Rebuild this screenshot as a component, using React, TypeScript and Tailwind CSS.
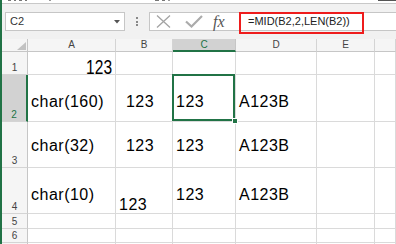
import React from 'react'

const green = '#217346'

function ColHead({ label, active = false }: { label: string; active?: boolean }) {
    return (
        <div
            className={
                active
                    ? 'flex items-center justify-center bg-[#d2d2d2] border-r border-r-[#c6c6c6] border-b-2 border-b-[#217346] text-[10px] leading-none text-[#217346]'
                    : 'flex items-center justify-center bg-[#f5f5f5] border-r border-r-[#d4d4d4] border-b border-b-[#c6c6c6] text-[10px] leading-none text-[#444]'
            }
        >
            {label}
        </div>
    )
}

function RowHead({ label, active = false }: { label: string; active?: boolean }) {
    return (
        <div
            className={
                active
                    ? 'flex items-end justify-center pb-[1px] bg-[#d2d2d2] border-r-2 border-r-[#217346] border-b border-b-[#d4d4d4] text-[10px] leading-[10px] text-[#217346]'
                    : 'flex items-end justify-center pb-[1px] bg-[#f5f5f5] border-r border-r-[#c6c6c6] border-b border-b-[#d4d4d4] text-[10px] leading-[10px] text-[#444]'
            }
        >
            {label}
        </div>
    )
}

function Cell({ children, className = '' }: { children?: React.ReactNode; className?: string }) {
    return (
        <div className={`flex items-center border-r border-b border-[#dadada] pl-[3px] text-[16px] leading-[21px] tracking-[0.5px] text-black whitespace-pre overflow-visible ${className}`}>
            {children}
        </div>
    )
}

export default function App() {
    return (
        <div className="w-[396px] h-[244px] overflow-hidden bg-white border-l-2 border-[#217346] flex flex-col font-['Liberation_Sans',Arial,sans-serif]">
            {/* cut-off ribbon strip */}
            <div className="h-[4px] shrink-0 border-b border-[#c8c8c8] flex items-start">
                <div className="ml-[6px] flex gap-[3px]">
                    <span className="w-[3px] h-[1px] bg-[#777]" />
                    <span className="w-[2px] h-[1px] bg-[#777]" />
                    <span className="w-[3px] h-[1px] bg-[#777]" />
                    <span className="w-[2px] h-[1px] bg-[#777]" />
                </div>
                <span className="ml-[22px] w-[2px] h-[1px] bg-[#999]" />
                <div className="ml-[104px] flex gap-[3px]">
                    <span className="w-[4px] h-[1px] bg-[#777]" />
                    <span className="w-[3px] h-[1px] bg-[#777]" />
                    <span className="w-[2px] h-[1px] bg-[#999]" />
                </div>
                <span className="ml-auto w-[18px] h-[1px] bg-[#555]" />
            </div>

            {/* formula bar */}
            <div className="h-[35px] shrink-0 bg-[#f1f1f1] flex items-start pt-[8px] pl-[3px]">
                <div className="w-[120px] h-[19px] bg-white border border-[#c6c6c6] flex items-center justify-between pl-[4px] pr-[4px]">
                    <span className="text-[11px] leading-none text-[#333]">C2</span>
                    <svg width="6" height="4" viewBox="0 0 6 4">
                        <path d="M0 0 L6 0 L3 3.5 Z" fill="#555" />
                    </svg>
                </div>
                <div className="ml-[11px] mt-[5px] flex flex-col gap-[1.5px]">
                    <span className="w-[2px] h-[2px] bg-[#888]" />
                    <span className="w-[2px] h-[2px] bg-[#888]" />
                    <span className="w-[2px] h-[2px] bg-[#888]" />
                </div>
                <div className="ml-[11px] flex-1 h-[19px] bg-white border border-r-0 border-[#c6c6c6] relative flex items-center">
                    <svg className="ml-[6px]" width="15" height="13" viewBox="0 0 15 13">
                        <path d="M1 0.5 L14 12.5 M14 0.5 L1 12.5" stroke="#a3a3a3" strokeWidth="1.3" fill="none" />
                    </svg>
                    <svg className="ml-[14px]" width="18" height="13" viewBox="0 0 18 13">
                        <path d="M1 6.5 L6.5 11.5 L17 1" stroke="#ababab" strokeWidth="2.2" fill="none" />
                    </svg>
                    <span className="ml-[10px] w-[17px] text-[16px] leading-none italic text-[#555] font-['Liberation_Serif',serif]">fx</span>
                    <span className="ml-[18px] text-[11px] leading-none text-[#222]">=MID(B2,2,LEN(B2))</span>
                    <div className="absolute left-[89px] top-[-1px] w-[125px] h-[22px] border-2 border-[#ee1c1c]" />
                </div>
            </div>

            {/* sheet */}
            <div className="flex-1 grid grid-cols-[26px_88px_57px_63px_81px_58px_1fr] grid-rows-[13px_23px_47px_46px_46px_15px_14px_1fr]">
                <div className="flex items-end justify-end pr-[1px] pb-[1px] bg-[#f5f5f5] border-r border-r-[#c6c6c6] border-b border-b-[#c6c6c6]">
                    <svg width="9" height="8" viewBox="0 0 9 8">
                        <path d="M9 0 L9 8 L0 8 Z" fill="#c2c2c2" />
                    </svg>
                </div>
                <ColHead label="A" />
                <ColHead label="B" />
                <ColHead label="C" active />
                <ColHead label="D" />
                <ColHead label="E" />
                <ColHead label="" />

                <RowHead label="1" />
                <Cell className="items-end justify-end pr-[3px] pl-0">
                    <span className="inline-block text-[21px] leading-[21px] tracking-normal scale-x-[0.74] origin-right translate-y-[3px]">123</span>
                </Cell>
                <Cell />
                <Cell />
                <Cell />
                <Cell />
                <Cell />

                <RowHead label="2" active />
                <Cell className="pt-[7px]">char(160)</Cell>
                <Cell className="pt-[7px] pl-[5px]">{'\u00a0123'}</Cell>
                <Cell className="pt-[7px] relative">
                    123
                    <div className="absolute -top-[1px] -left-[1px] right-0 bottom-0 border-2 border-[#217346]" />
                    <div className="absolute -right-[3px] -bottom-[3px] w-[6px] h-[6px] bg-[#217346] border border-white" />
                </Cell>
                <Cell className="pt-[7px]">A123B</Cell>
                <Cell />
                <Cell />

                <RowHead label="3" />
                <Cell className="pt-[1px]">char(32)</Cell>
                <Cell className="pt-[1px] pl-[5px]">{' 123'}</Cell>
                <Cell className="pt-[1px]">123</Cell>
                <Cell className="pt-[1px]">A123B</Cell>
                <Cell />
                <Cell />

                <RowHead label="4" />
                <Cell className="pt-[7px]">char(10)</Cell>
                <Cell className="pt-[7px] whitespace-pre-line">{'\n123'}</Cell>
                <Cell className="pt-[7px]">123</Cell>
                <Cell className="pt-[7px]">A123B</Cell>
                <Cell />
                <Cell />

                <RowHead label="5" />
                <Cell />
                <Cell />
                <Cell />
                <Cell />
                <Cell />
                <Cell />

                <RowHead label="6" />
                <Cell />
                <Cell />
                <Cell />
                <Cell />
                <Cell />
                <Cell />

                <RowHead label="" />
                <Cell />
                <Cell />
                <Cell />
                <Cell />
                <Cell />
                <Cell />
            </div>
        </div>
    )
}
